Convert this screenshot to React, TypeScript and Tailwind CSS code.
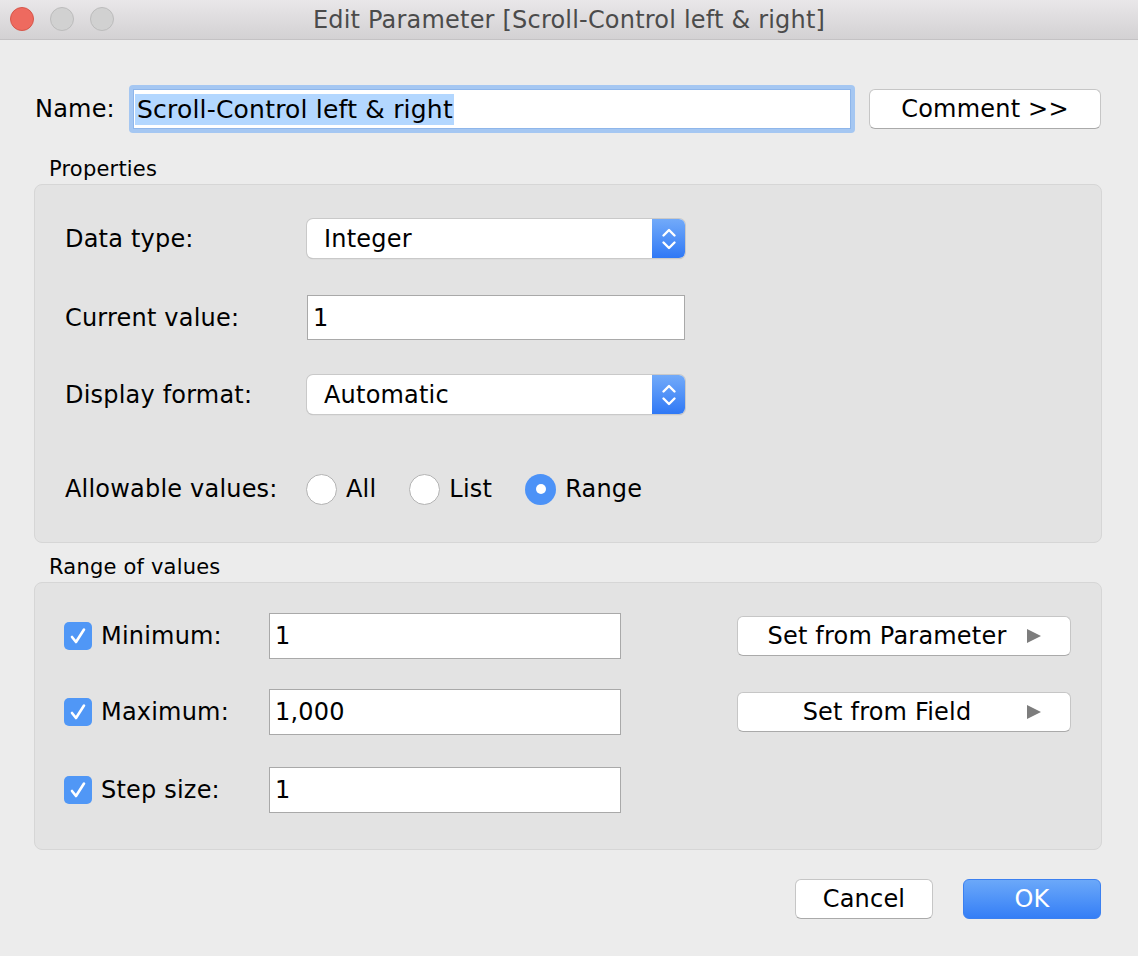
import React from "react"

function Chevrons() {
  return (
    <svg width="16" height="24" viewBox="0 0 16 24">
      <path d="M2.5 8.5 L8 3 L13.5 8.5" fill="none" stroke="white" strokeWidth="2.4" strokeLinecap="round" strokeLinejoin="round" />
      <path d="M2.5 15.5 L8 21 L13.5 15.5" fill="none" stroke="white" strokeWidth="2.4" strokeLinecap="round" strokeLinejoin="round" />
    </svg>
  )
}

function Select({ value }: { value: string }) {
  return (
    <div className="flex h-[39px] w-[378px] overflow-hidden rounded-[6px] bg-white shadow-[0_0_0_1px_#c9c9c9,0_1px_1px_rgba(0,0,0,0.25)]">
      <span className="flex flex-1 items-center pl-[17px]">{value}</span>
      <span className="flex w-[33px] items-center justify-center bg-linear-to-b from-[#72aaf9] to-[#2f78f5]">
        <Chevrons />
      </span>
    </div>
  )
}

function TextInput({ value, w, h }: { value: string; w: string; h: string }) {
  return (
    <div className={`flex items-center border border-[#a9a9a9] bg-white pl-[5px] ${w} ${h}`}>
      {value}
    </div>
  )
}

function Radio({ on, label }: { on?: boolean; label: string }) {
  return (
    <span className="flex items-center gap-[9px]">
      {on ? (
        <span className="flex h-[31px] w-[31px] items-center justify-center rounded-full bg-[#4c92f7]">
          <span className="h-[10px] w-[10px] rounded-full bg-white" />
        </span>
      ) : (
        <span className="h-[31px] w-[31px] rounded-full border border-[#b3b3b3] bg-white" />
      )}
      <span>{label}</span>
    </span>
  )
}

function Check() {
  return (
    <span className="flex h-[28px] w-[28px] items-center justify-center rounded-[5px] bg-[#5097f6]">
      <svg width="22" height="20" viewBox="0 0 22 20">
        <path d="M5 11 L9 16 L17 3.5" fill="none" stroke="white" strokeWidth="2.6" strokeLinecap="round" strokeLinejoin="round" />
      </svg>
    </span>
  )
}

function Arrow() {
  return (
    <svg width="16" height="16" viewBox="0 0 16 16" className="mr-[28px]">
      <path d="M1 1 L15 8 L1 15 Z" fill="#7d7d7d" />
    </svg>
  )
}

function RangeRow({ label, value, button }: { label: string; value: string; button?: string }) {
  return (
    <div className="flex h-[46px] items-center">
      <div className="flex w-[205px] items-center gap-[9px]">
        <Check />
        <span>{label}</span>
      </div>
      <TextInput value={value} w="w-[352px]" h="h-[46px]" />
      {button && (
        <button className="ml-auto mr-[30px] flex h-[40px] w-[334px] items-center rounded-[6px] border border-[#c6c6c6] border-b-[#aaaaaa] bg-white pl-[10px]">
          <span className="flex-1 text-center">{button}</span>
          <Arrow />
        </button>
      )}
    </div>
  )
}

export default function App() {
  return (
    <div className="h-[956px] w-[1138px] overflow-hidden bg-[#ececec] font-['DejaVu_Sans',sans-serif] text-[24px] leading-none tracking-[0.2px] text-black">
      {/* title bar */}
      <div className="relative flex h-[40px] items-center justify-center border-b border-[#c4c2c4] bg-linear-to-b from-[#e9e7e9] to-[#d3d1d3]">
        <div className="absolute left-[10px] top-[7px] flex gap-[16px]">
          <span className="h-[24px] w-[24px] rounded-full border border-[#d6564a] bg-[#ee6a5f]" />
          <span className="h-[24px] w-[24px] rounded-full border border-[#bcbcbc] bg-[#d1d1d1]" />
          <span className="h-[24px] w-[24px] rounded-full border border-[#bcbcbc] bg-[#d1d1d1]" />
        </div>
        <span className="text-[24px] text-[#4b4b4b]">Edit Parameter [Scroll-Control left &amp; right]</span>
      </div>

      <div className="flex flex-col pl-[34px] pr-[36px]">
        {/* name row */}
        <div className="mt-[45px] flex h-[48px] items-center">
          <span className="w-[95px] pl-px">Name:</span>
          <div className="h-[48px] w-[726px] rounded-[4px] bg-[#a5c7f2] p-[4px]">
            <div className="flex h-full items-center border border-[#8fb6ea] bg-white pl-[1px]">
              <span className="bg-[#b3d7ff] py-[3px] pl-[2px] pr-px text-[25px]">Scroll-Control left &amp; right</span>
            </div>
          </div>
          <button className="ml-[14px] flex h-[40px] w-[232px] items-center justify-center rounded-[6px] border border-[#c6c6c6] border-b-[#aaaaaa] bg-white">
            Comment &gt;&gt;
          </button>
        </div>

        {/* properties */}
        <div className="mb-[3px] mt-[24px] h-[24px] pl-[15px] text-[21px] leading-[24px]">Properties</div>
        <div className="flex h-[359px] flex-col rounded-[8px] border border-[#d6d6d6] bg-[#e3e3e3] pl-[30px] pt-[34px]">
          <div className="flex h-[39px] items-center">
            <span className="w-[242px]">Data type:</span>
            <Select value="Integer" />
          </div>
          <div className="mt-[37px] flex h-[45px] items-center">
            <span className="w-[242px]">Current value:</span>
            <TextInput value="1" w="w-[378px]" h="h-[45px]" />
          </div>
          <div className="mt-[35px] flex h-[39px] items-center">
            <span className="w-[242px]">Display format:</span>
            <Select value="Automatic" />
          </div>
          <div className="mt-[59px] flex h-[32px] items-center">
            <span className="w-[241px]">Allowable values:</span>
            <div className="flex items-center gap-[33px]">
              <Radio label="All" />
              <Radio label="List" />
              <Radio on label="Range" />
            </div>
          </div>
        </div>

        {/* range of values */}
        <div className="mb-[3px] mt-[12px] h-[24px] pl-[15px] text-[21px] leading-[24px]">Range of values</div>
        <div className="flex h-[268px] flex-col rounded-[8px] border border-[#d6d6d6] bg-[#e3e3e3] pl-[29px] pt-[30px]">
          <RangeRow label="Minimum:" value="1" button="Set from Parameter" />
          <div className="mt-[30px]">
            <RangeRow label="Maximum:" value="1,000" button="Set from Field" />
          </div>
          <div className="mt-[32px]">
            <RangeRow label="Step size:" value="1" />
          </div>
        </div>

        {/* footer */}
        <div className="mt-[29px] flex justify-end gap-[30px] pr-px">
          <button className="flex h-[40px] w-[138px] items-center justify-center rounded-[6px] border border-[#c6c6c6] border-b-[#aaaaaa] bg-white">
            Cancel
          </button>
          <button className="flex h-[40px] w-[138px] items-center justify-center rounded-[6px] border border-[#3b80f0] bg-linear-to-b from-[#6ba8f9] to-[#347ef6] text-white">
            OK
          </button>
        </div>
      </div>
    </div>
  )
}
